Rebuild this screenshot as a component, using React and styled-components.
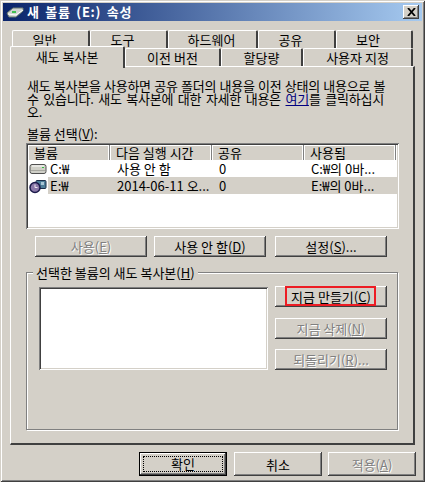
import React from 'react'
import styled, { createGlobalStyle, css } from 'styled-components'

const FONT = `"Noto Sans CJK KR", "Liberation Sans", sans-serif`

const GlobalStyle = createGlobalStyle`
  html, body { margin: 0; padding: 0; background: #d4d0c8; }
  * { box-sizing: border-box; }
`

const raised = css`
  box-shadow: inset -1px -1px 0 #404040, inset 1px 1px 0 #fff, inset -2px -2px 0 #808080;
`
const sunken = css`
  box-shadow: inset 1px 1px 0 #808080, inset -1px -1px 0 #fff, inset 2px 2px 0 #404040, inset -2px -2px 0 #d4d0c8;
`

const DriveIcon = () => (
  <svg width="18" height="16" viewBox="0 0 18 16">
    <path d="M3 3.5h12q2 0 2 2v5q0 2-2 2H3q-2 0-2-2v-5q0-2 2-2z" fill="#d0d0c8" stroke="#505050" />
    <path d="M3 5h12" stroke="#fff" />
    <path d="M2 9.5h14" stroke="#a8a8a0" />
    <rect x="13" y="6" width="2" height="1" fill="#2fbf3f" />
  </svg>
)

const ShadowDriveIcon = () => (
  <svg width="18" height="16" viewBox="0 0 18 16">
    <rect x="7" y="2.5" width="10" height="8" rx="1" fill="#4f7f9a" stroke="#1c2e4a" />
    <rect x="12" y="4" width="3" height="3" fill="#a9c6d6" />
    <circle cx="6" cy="9.5" r="5" fill="#8a78a8" stroke="#1c1a4a" strokeWidth="1.5" />
    <path d="M6 6.5v3h2.5" stroke="#f0e8f0" fill="none" />
  </svg>
)

const TitleDriveIcon = () => (
  <svg width="18" height="14" viewBox="0 0 18 14">
    <path d="M1 8l6-5h10v3l-7 6H3z" fill="#cfd3d0" stroke="#6a7a70" />
    <path d="M2 9l8 1 7-5" stroke="#fff" fill="none" />
    <rect x="6" y="6" width="4" height="2" fill="#3fc04f" />
  </svg>
)

export default function App() {
  const topTabs = [['일반', 78, 12], ['도구', 78, 12], ['하드웨어', 90, 2], ['공유', 78, 12], ['보안', 77, 12]]
  const bottomTabs = [['이전 버전', 96], ['할당량', 82], ['사용자 지정', 110]]
  const columns = [['볼륨', 82], ['다음 실행 시간', 102], ['공유', 92], ['사용됨', 92]]
  const volumes = [
    { icon: <DriveIcon />, name: 'C:₩', next: '사용 안 함', shares: '0', used: 'C:₩의 0바...' },
    { icon: <ShadowDriveIcon />, name: 'E:₩', next: '2014-06-11 오...', shares: '0', used: 'E:₩의 0바...', selected: true },
  ]

  return (
    <Window>
      <GlobalStyle />
      <TitleBar>
        <TitleDriveIcon />
        <TitleText>새 볼륨 (E:) 속성</TitleText>
        <CloseButton>
          <svg width="9" height="8" viewBox="0 0 9 8">
            <path d="M1 0l7 8M8 0L1 8" stroke="#000" strokeWidth="1.8" />
          </svg>
        </CloseButton>
      </TitleBar>

      <TabRow $top>
        {topTabs.map(([label, w, shift]) => <Tab key={label} $w={w} $shift={shift}>{label}</Tab>)}
      </TabRow>
      <TabRow>
        <ActiveTab>새도 복사본</ActiveTab>
        {bottomTabs.map(([label, w]) => <Tab key={label} $w={w}>{label}</Tab>)}
      </TabRow>

      <Panel>
        <Intro>
          <IntroLine $words={0.7}>새도 복사본을 사용하면 공유 폴더의 내용을 이전 상태의 내용으로 볼</IntroLine>
          <IntroLine $words={2}>수 있습니다. 새도 복사본에 대한 자세한 내용은 <HelpLink>여기</HelpLink>를 클릭하십시</IntroLine>
          <IntroLine>오.</IntroLine>
        </Intro>

        <FieldLabel>볼륨 선택(<u>V</u>):</FieldLabel>
        <VolumeList>
          <HeaderRow>
            {columns.map(([label, w]) => <HeaderCell key={label} $w={w}>{label}</HeaderCell>)}
          </HeaderRow>
          {volumes.map(v => (
            <VolumeRow key={v.name}>
              <IconSlot>{v.icon}</IconSlot>
              <RowCells $selected={v.selected}>
                <Cell $w={62}>{v.name}</Cell>
                <Cell $w={102}>{v.next}</Cell>
                <Cell $w={92}>{v.shares}</Cell>
                <Cell $w={92}>{v.used}</Cell>
              </RowCells>
            </VolumeRow>
          ))}
        </VolumeList>

        <ActionRow>
          <Button disabled>사용(<u>E</u>)</Button>
          <Button>사용 안 함(<u>D</u>)</Button>
          <Button $push>설정(<u>S</u>)...</Button>
        </ActionRow>

        <Group>
          <Legend>선택한 볼륨의 새도 복사본(<u>H</u>)</Legend>
          <ShadowList />
          <SideButtons>
            <Button>
              지금 만들기(<u>C</u>)
              <RedMark />
            </Button>
            <Button disabled>지금 삭제(<u>N</u>)</Button>
            <Button disabled>되돌리기(<u>R</u>)...</Button>
          </SideButtons>
        </Group>
      </Panel>

      <Footer>
        <DefaultButton><FocusRing>확인</FocusRing></DefaultButton>
        <FooterButton>취소</FooterButton>
        <FooterButton disabled>적용(<u>A</u>)</FooterButton>
      </Footer>
    </Window>
  )
}

const Window = styled.div`
  width: 425px;
  height: 482px;
  padding: 3px 3px 0;
  background: #d4d0c8;
  font-family: ${FONT};
  font-size: 13px;
  color: #000;
  overflow: hidden;
  box-shadow: inset 1px 1px 0 #d4d0c8, inset -1px -1px 0 #404040, inset 2px 2px 0 #fff, inset -2px -2px 0 #808080;
`
const TitleBar = styled.div`
  height: 18px;
  display: flex;
  align-items: center;
  padding: 0 3px 0 3px;
  background: linear-gradient(to right, #0a246a, #a6caf0);
`
const TitleText = styled.span`
  margin-left: 3px;
  flex: 1;
  color: #fff;
  font-weight: 700;
  font-size: 13px;
  letter-spacing: 0.7px;
  word-spacing: 2px;
  line-height: 18px;
`
const CloseButton = styled.div`
  width: 16px;
  height: 14px;
  display: flex;
  align-items: center;
  justify-content: center;
  background: #d4d0c8;
  ${raised}
`
const TabRow = styled.div`
  height: 18px;
  display: flex;
  margin-top: ${p => (p.$top ? '9px' : '0')};
  padding-left: ${p => (p.$top ? '9px' : '7px')};
  position: relative;
`
const Tab = styled.div`
  width: ${p => p.$w}px;
  height: 18px;
  padding-right: ${p => p.$shift || 0}px;
  text-align: center;
  line-height: 18px;
  white-space: nowrap;
  background: #d4d0c8;
  border-top: 1px solid #fff;
  border-left: 1px solid #fff;
  border-right: 2px solid #404040;
  border-radius: 2px 2px 0 0;
`
const ActiveTab = styled.div`
  width: 115px;
  height: 22px;
  margin-top: -2px;
  padding-top: 1px;
  text-align: center;
  line-height: 17px;
  background: #d4d0c8;
  border-top: 1px solid #fff;
  border-left: 1px solid #fff;
  border-right: 2px solid #404040;
  border-radius: 2px 2px 0 0;
  position: relative;
  z-index: 2;
`
const Panel = styled.div`
  width: 405px;
  height: 379px;
  margin-left: 7px;
  padding: 12px 15px 0 15px;
  border-top: 1px solid #fff;
  border-left: 1px solid #fff;
  border-right: 2px solid #404040;
  border-bottom: 2px solid #404040;
`
const Intro = styled.div`
  padding-left: 1px;
  letter-spacing: -0.25px;
  white-space: nowrap;
`
const IntroLine = styled.div`
  height: 13px;
  line-height: 13px;
  word-spacing: ${p => p.$words || 0}px;
`
const HelpLink = styled.span`
  color: #000080;
  text-decoration: underline;
`
const FieldLabel = styled.div`
  margin-top: 8px;
  padding-left: 1px;
  line-height: 16px;
`
const VolumeList = styled.div`
  width: 373px;
  height: 86px;
  margin-top: 1px;
  padding: 2px 2px;
  background: #fff;
  ${sunken}
`
const HeaderRow = styled.div`
  display: flex;
  height: 15px;
`
const HeaderCell = styled.div`
  width: ${p => p.$w}px;
  height: 15px;
  padding-left: 6px;
  line-height: 15px;
  background: #d4d0c8;
  border-right: 1px solid #808080;
  box-shadow: inset 1px 1px 0 #fff, inset -1px 0 0 #fff;
`
const VolumeRow = styled.div`
  display: flex;
  height: 17px;
  align-items: center;
`
const IconSlot = styled.div`
  width: 20px;
  display: flex;
  justify-content: flex-end;
  padding-right: 1px;
`
const RowCells = styled.div`
  display: flex;
  flex: 1;
  height: 17px;
  align-items: center;
  background: ${p => (p.$selected ? '#d4d0c8' : 'transparent')};
`
const Cell = styled.div`
  width: ${p => p.$w}px;
  padding-left: 2px;
  white-space: nowrap;
  overflow: hidden;
  &:not(:first-child) { padding-left: 7px; }
`
const ActionRow = styled.div`
  display: flex;
  gap: 7px;
  margin-top: 7px;
  padding-left: 9px;
`
const Button = styled.button`
  position: relative;
  width: 112px;
  height: 21px;
  margin-left: ${p => (p.$push ? '2px' : '0')};
  padding: 0;
  border: 0;
  background: #d4d0c8;
  font: inherit;
  line-height: 19px;
  color: #000;
  ${raised}
  &:disabled {
    color: #808080;
    text-shadow: 1px 1px 0 #fff;
  }
`
const Group = styled.div`
  position: relative;
  width: 372px;
  height: 158px;
  margin-top: 15px;
  padding: 13px 0 0 12px;
  display: flex;
  gap: 7px;
  border: 1px solid #808080;
  box-shadow: inset 1px 1px 0 #fff, 1px 1px 0 #fff;
`
const Legend = styled.div`
  position: absolute;
  top: -8px;
  left: 6px;
  padding: 0 3px;
  line-height: 16px;
  background: #d4d0c8;
`
const ShadowList = styled.div`
  width: 229px;
  height: 83px;
  margin-top: 1px;
  background: #fff;
  ${sunken}
`
const SideButtons = styled.div`
  display: flex;
  flex-direction: column;
  gap: 10.5px;
`
const RedMark = styled.span`
  position: absolute;
  top: 0;
  left: 10px;
  width: 91px;
  height: 20px;
  border: 2px solid #ed1c24;
`
const Footer = styled.div`
  display: flex;
  gap: 6px;
  margin-top: 7px;
  padding-left: 136px;
`
const FooterButton = styled.button`
  width: 88px;
  height: 24px;
  padding: 0;
  border: 0;
  background: #d4d0c8;
  font: inherit;
  color: #000;
  ${raised}
  &:disabled {
    color: #808080;
    text-shadow: 1px 1px 0 #fff;
  }
`
const DefaultButton = styled(FooterButton)`
  margin-right: 1px;
  border: 1px solid #000;
  padding: 3px;
`
const FocusRing = styled.span`
  display: block;
  height: 100%;
  line-height: 14px;
  border: 1px dotted #000;
`
